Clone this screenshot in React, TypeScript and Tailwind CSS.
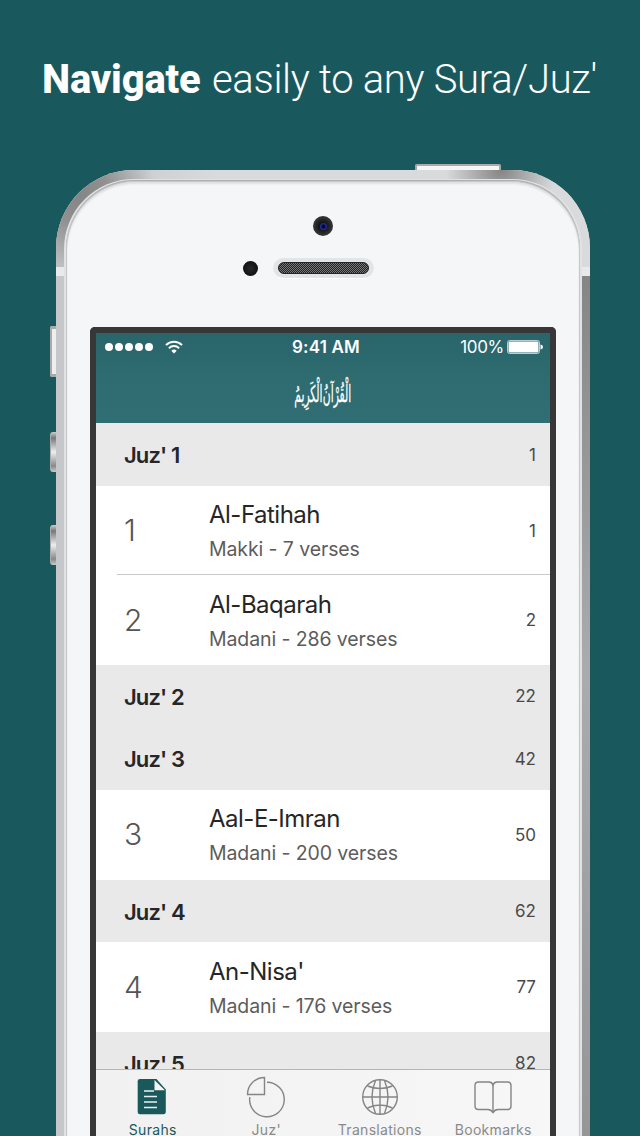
import React from "react";

type Entry =
  | { kind: "juz"; title: string; page: string }
  | { kind: "sura"; no: string; title: string; info: string; page: string; divided?: boolean };

const entries: Entry[] = [
  { kind: "juz", title: "Juz' 1", page: "1" },
  { kind: "sura", no: "1", title: "Al-Fatihah", info: "Makki - 7 verses", page: "1" },
  { kind: "sura", no: "2", title: "Al-Baqarah", info: "Madani - 286 verses", page: "2", divided: true },
  { kind: "juz", title: "Juz' 2", page: "22" },
  { kind: "juz", title: "Juz' 3", page: "42" },
  { kind: "sura", no: "3", title: "Aal-E-Imran", info: "Madani - 200 verses", page: "50" },
  { kind: "juz", title: "Juz' 4", page: "62" },
  { kind: "sura", no: "4", title: "An-Nisa'", info: "Madani - 176 verses", page: "77" },
  { kind: "juz", title: "Juz' 5", page: "82" },
];

function JuzRow({ title, page }: { title: string; page: string }) {
  return (
    <div className="flex h-[62.6px] shrink-0 items-center justify-between bg-[#e9e9e9] pt-[2px] pr-[14px] pl-[28px]">
      <span className="text-[22px] font-semibold tracking-[-0.9px] text-[#262626]">{title}</span>
      <span className="text-[17px] text-[#4a4a4a]">{page}</span>
    </div>
  );
}

function SuraRow({ no, title, info, page, divided }: { no: string; title: string; info: string; page: string; divided?: boolean }) {
  return (
    <div className="relative flex h-[89.65px] shrink-0 items-center bg-white pr-[14px] pl-[28px]">
      {divided && <div className="absolute top-[-1px] right-0 left-[21px] h-px bg-[#c9c9c9]" />}
      <span className="w-[85px] text-[30px] font-light text-[#555]">{no}</span>
      <div className="flex flex-1 flex-col pt-[3px]">
        <span className="text-[24px] leading-[34px] tracking-[-0.5px] text-[#262626]">{title}</span>
        <span className="text-[19.5px] leading-[34px] tracking-[-0.1px] text-[#5c5c5c]">{info}</span>
      </div>
      <span className="pt-[2px] text-[17px] text-[#4a4a4a]">{page}</span>
    </div>
  );
}

function WifiIcon() {
  return (
    <svg className="ml-[10px] h-[14px] w-[18px]" viewBox="0 0 18 14" fill="none" stroke="#fff">
      <path d="M1 5.1a11.5 11.5 0 0 1 16 0" strokeWidth="2" />
      <path d="M3.9 8.2a7.3 7.3 0 0 1 10.2 0" strokeWidth="2" />
      <path d="M6.3 10.7a3.9 3.9 0 0 1 5.4 0L9 13.5Z" fill="#fff" stroke="none" />
    </svg>
  );
}

function StatusBar() {
  return (
    <div className="grid h-[29px] grid-cols-[1fr_auto_1fr] items-center pr-[7px] pl-[9px] text-[17px] text-white">
      <div className="flex items-center gap-[2px] pb-px">
        {[0, 1, 2, 3, 4].map((i) => (
          <span key={i} className="size-[8px] rounded-full bg-white" />
        ))}
        <WifiIcon />
      </div>
      <span className="pl-[4px] font-semibold tracking-[0.2px]">9:41 AM</span>
      <div className="flex items-center justify-end">
        <span className="mr-[3px] tracking-[-0.3px]">100%</span>
        <svg className="mb-px h-[14px] w-[36px]" viewBox="0 0 36 14">
          <rect x="0.5" y="0.5" width="32" height="13" rx="2" fill="none" stroke="#b9d0d2" />
          <rect x="1.5" y="1.5" width="30" height="11" rx="1" fill="#fff" />
          <path d="M33.5 4.5a2.5 2.5 0 0 1 0 5Z" fill="#fff" />
        </svg>
      </div>
    </div>
  );
}

function SurahsIcon() {
  return (
    <svg className="h-[38px] w-[40px]" viewBox="0 0 40 38">
      <path d="M7 1H23.500l9.300 10.500v22.500a2.300 2.300 0 0 1-2.300 2.300H7A2.300 2.300 0 0 1 4.700 34V3.300A2.300 2.300 0 0 1 7 1Z" fill="#19595c" />
      <path d="M21.500 2v10.200h10.400Z" fill="#f5f5f5" />
      <path d="M11 13h10M11 18.500h13M11 24h13M11 29.500h13" stroke="#e9efef" strokeWidth="1.700" />
    </svg>
  );
}

function JuzIcon() {
  return (
    <svg className="h-[42px] w-[40px]" viewBox="0 0 40 42" fill="none" stroke="#858585" strokeWidth="1.400">
      <path d="M18.500 1.500v17h-17a17 17 0 0 1 17-17Z" />
      <path d="M21 6.200A17.300 17.300 0 1 1 3.800 21.200" />
    </svg>
  );
}

function GlobeIcon() {
  return (
    <svg className="h-[38px] w-[38px]" viewBox="0 0 38 38" fill="none" stroke="#858585" strokeWidth="1.400">
      <circle cx="19" cy="19" r="17.300" />
      <path d="M19 1.700v34.600M1.700 19h34.600M6.500 8q12.500 5 25 0M6.500 30q12.500-6 25 0" />
      <path d="M14.500 2.500q-7 16.500 0 33M23.500 2.500q7 16.500 0 33" />
    </svg>
  );
}

function BookIcon() {
  return (
    <svg className="h-[38px] w-[40px]" viewBox="0 0 40 38" fill="none" stroke="#858585" strokeWidth="1.400">
      <path d="M20 6q-1-3-4-3H5.500Q2 3 2 6.500v20.500q0 3.500 3.500 3.500H15q3 0 5 3 2-3 5-3h9.500q3.500 0 3.500-3.500V6.500Q38 3 34.500 3H24q-3 0-4 3Z" />
      <path d="M20 6v27.500" />
    </svg>
  );
}

function TabBar() {
  return (
    <div className="grid h-[72px] shrink-0 grid-cols-4 border-t border-[#b5b5b5] bg-gradient-to-r from-[#f1f1f1] to-[#f7f7f7] text-[14px] tracking-[0.3px] text-[#8a8a8a]">
      <div className="flex flex-col items-center text-[#19595c]">
        <div className="flex h-[50px] items-end pb-[4px]"><SurahsIcon /></div>
        <span className="leading-[20px]">Surahs</span>
      </div>
      <div className="flex flex-col items-center">
        <div className="flex h-[50px] items-end pb-[2px]"><JuzIcon /></div>
        <span className="leading-[20px]">Juz'</span>
      </div>
      <div className="flex flex-col items-center">
        <div className="flex h-[50px] items-end pb-[4px]"><GlobeIcon /></div>
        <span className="leading-[20px]">Translations</span>
      </div>
      <div className="flex flex-col items-center">
        <div className="flex h-[50px] items-end pb-[3px]"><BookIcon /></div>
        <span className="leading-[20px]">Bookmarks</span>
      </div>
    </div>
  );
}

function Screen() {
  return (
    <div className="ml-[23px] w-[466px] rounded-t-[5px] border-[6px] border-b-0 border-[#373737] font-['Inter',sans-serif]">
      <div className="flex h-[809px] flex-col overflow-hidden">
        <div className="h-[90px] shrink-0 bg-gradient-to-b from-[#29656b] via-[#2e6c70] to-[#306e75]">
          <StatusBar />
          <div className="flex h-[61px] items-center justify-center pt-[3px]">
            <span dir="rtl" className="scale-x-[0.51] scale-y-[1.1] font-['DejaVu_Sans',sans-serif] text-[21px] leading-[30px] [word-spacing:-6px] whitespace-nowrap text-white [-webkit-text-stroke:0.3px_white]">
              الْقُرْآنُ الْكَرِيمُ
            </span>
          </div>
        </div>
        <div className="flex h-[646px] shrink-0 flex-col overflow-hidden">
          {entries.map((e) => (e.kind === "juz" ? <JuzRow key={e.title} {...e} /> : <SuraRow key={e.title} {...e} />))}
        </div>
        <TabBar />
      </div>
    </div>
  );
}

export default function App() {
  return (
    <main className="h-[1136px] w-[640px] overflow-hidden bg-[#19595d]">
      <h1 className="flex h-[170px] items-start pt-[56px] pl-[42px] font-['Roboto',sans-serif] text-[40px] leading-[48px] font-light whitespace-pre text-white">
        <span className="font-extrabold tracking-[-0.2px]">Navigate</span>
        <span className="ml-[2px] tracking-[-0.3px]"> easily to any Sura/Juz'</span>
      </h1>
      <div className="relative ml-[56px] w-[534px]">
        <div className="absolute top-[-6px] left-[359px] h-[8px] w-[86px] rounded-t-[2px] border-x-2 border-t-2 border-x-[#a5a5a7] border-t-[#aaaaac] bg-[#f6f6f6]" />
        <div className="absolute top-[156px] left-[-6px] h-[51px] w-[7px] rounded-l-[2px] border-y-3 border-l-2 border-[#aaa] bg-[#eee]" />
        <div className="absolute top-[262px] left-[-6px] h-[40px] w-[7px] rounded-l-[3px] border-l border-[#aaa] bg-[linear-gradient(#ccc,#777_15%,#eee_50%,#888_85%,#ccc)]" />
        <div className="absolute top-[355px] left-[-6px] h-[40px] w-[7px] rounded-l-[3px] border-l border-[#aaa] bg-[linear-gradient(#ccc,#777_15%,#eee_50%,#888_85%,#ccc)]" />
        <div className="relative h-[966px] overflow-hidden rounded-t-[78px] bg-[linear-gradient(to_right,#c6c7ca_0,#c6c7ca_50%,transparent_50%),linear-gradient(to_bottom,#d6d7d9_0,#d6d7d9_60px,#bdbebf_97px,#858585_106px,#949494_250px,#aaabad_500px,#969697_966px)] px-[8px] pt-[9px]">
          <div className="absolute inset-x-0 top-0 h-[105px] bg-[radial-gradient(circle_at_22px_24px,#858585_0,#919191_30px,transparent_78px),radial-gradient(circle_at_445px_0px,#858585_0,transparent_55px),linear-gradient(to_right,#c1c2c4,#d9dadc_30%,#d9dadc_75%,#d9dadc)]" />
          <div className="absolute inset-x-0 top-[97px] h-[9px] bg-[#e8e9e9]" />
          <div className="relative h-[960px] rounded-t-[70px] border-x-2 border-t border-[#e1e2e4] bg-[#aeb0b2] pt-px">
            <div className="h-[957px] rounded-t-[69px] border border-b-0 border-[#c7c8ca] bg-[#f5f6f8] shadow-[inset_0_2px_2px_rgba(0,0,0,0.09)]">
              <div className="flex flex-col items-center pt-[34px]">
                <div className="flex size-[20px] items-center justify-center rounded-full bg-[radial-gradient(circle,#111_20%,#343434_65%,#111)]">
                  <span className="size-[7px] rounded-full bg-[radial-gradient(circle,#050515_15%,#2234b4_70%)]" />
                </div>
                <div className="mt-[22px] flex w-full items-center pl-[176px]">
                  <span className="size-[15px] rounded-full bg-[radial-gradient(circle,#292929,#080808)]" />
                  <div className="ml-[15px] flex h-[21px] w-[101px] items-center rounded-full border-b border-white bg-[#e2e4e6] px-[5px]">
                    <div className="h-[12px] w-full rounded-full border border-[#252525] bg-[#333] bg-[repeating-conic-gradient(#222_0_25%,#777_0_50%)] bg-[length:2px_2px]" />
                  </div>
                </div>
              </div>
              <div className="mt-[48px]"><Screen /></div>
            </div>
          </div>
        </div>
      </div>
    </main>
  );
}
